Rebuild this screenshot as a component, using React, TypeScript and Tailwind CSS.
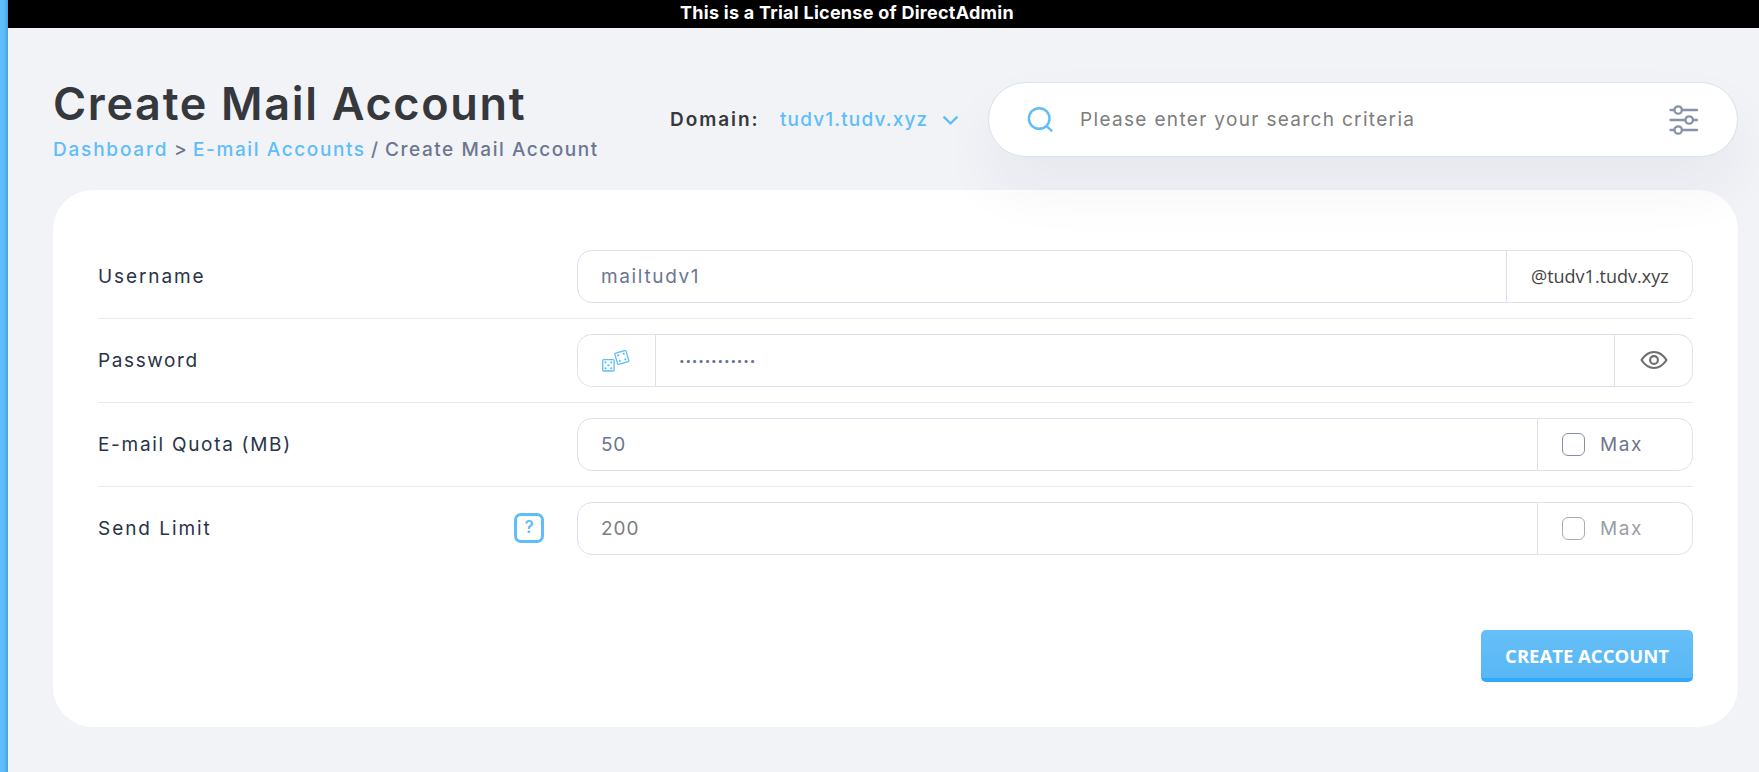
import React from "react";

const field =
  "min-w-0 flex-1 border border-[#d9e2ec] bg-transparent px-[23px] font-['Inter',sans-serif] outline-none";
const addon = "flex items-center border border-l-0 border-[#e1e3e6]";

function Row({ label, help, last, children }: { label: React.ReactNode; help?: boolean; last?: boolean; children: React.ReactNode }) {
  return (
    <div className={last ? "flex h-[84px] items-center border-b border-transparent" : "flex h-[84px] items-center border-b border-[#eaebed]"}>
      <div className="flex w-[479px] items-center justify-between pr-[33px] text-[#293347]">
        {label}
        {help && (
          <span className="mb-[2px] flex h-[30px] w-[30px] items-center justify-center rounded-[7px] border-[3px] border-[#5fbdfa] text-[17px] font-semibold text-[#5fbdfa]">
            ?
          </span>
        )}
      </div>
      <div className="flex h-[53px] w-[1116px]">{children}</div>
    </div>
  );
}

function Dice() {
  return (
    <svg width="28" height="22" viewBox="0 0 28 22" fill="none" stroke="#5fbdfa" strokeWidth="1.3">
      <rect x="0.7" y="9.6" width="11.4" height="11.4" rx="1" />
      <rect x="14" y="1.6" width="11.6" height="11.6" rx="1" transform="rotate(-16 19.8 7.4)" />
      <g fill="#5fbdfa" stroke="none">
        <circle cx="3.5" cy="12.3" r="1.1" />
        <circle cx="9.3" cy="12.3" r="1.1" />
        <circle cx="6.4" cy="15.3" r="1.1" />
        <circle cx="3.5" cy="18.3" r="1.1" />
        <circle cx="9.3" cy="18.3" r="1.1" />
        <g transform="rotate(-16 19.8 7.4)">
          <circle cx="16.9" cy="4.5" r="1.1" />
          <circle cx="22.7" cy="4.5" r="1.1" />
          <circle cx="16.9" cy="10.3" r="1.1" />
          <circle cx="22.7" cy="10.3" r="1.1" />
        </g>
      </g>
    </svg>
  );
}

export default function App() {
  return (
    <div className="flex h-[772px] w-[1759px] overflow-hidden bg-[#f1f3f7] font-['Inter',sans-serif] text-[19px]">
      <aside className="w-2 shrink-0 bg-linear-to-r from-[#5fbdfa] from-50% to-[#4b9fd6]" />
      <div className="flex flex-1 flex-col">
        <div className="flex h-7 items-center bg-black pb-[3px] pl-[672px] text-[18px] font-bold tracking-[0.26px] text-white">
          This is a Trial License of DirectAdmin
        </div>
        <header className="z-10 flex h-[162px] pl-[45px]">
          <div className="w-[617px] pt-[49px]">
            <h1 className="w-fit text-[45px] leading-[54px] font-semibold tracking-[1.68px] whitespace-nowrap text-[#35383c]">Create Mail Account</h1>
            <p className="flex text-[19px] leading-[37px] font-medium tracking-[1.6px] whitespace-nowrap text-[#6c7690]">
              <a className="w-[121px] tracking-[1.8px] text-[#5fbdfa]">Dashboard</a>
              <span className="w-[19px]">&gt;</span>
              <a className="w-[178px] text-[#5fbdfa]">E-mail Accounts</a>
              <span className="w-[14px]">/</span>
              <span className="tracking-[1.55px]">Create Mail Account</span>
            </p>
          </div>
          <div className="mt-[54px] flex h-[75px] w-[318px] items-center pt-[1px]">
            <span className="w-[110px] font-semibold tracking-[1.95px] text-[#35383c]">Domain:</span>
            <span className="w-[163px] font-medium tracking-[1.15px] text-[#5fbdfa]">tudv1.tudv.xyz</span>
            <svg width="15" height="9" viewBox="0 0 15 9" fill="none" stroke="#5fbdfa" strokeWidth="2.4" strokeLinecap="round" strokeLinejoin="round">
              <path d="M1.3 1.3 7.5 7.5 13.7 1.3" />
            </svg>
          </div>
          <div className="mt-[54px] flex h-[75px] w-[750px] items-center rounded-full border border-[#d9e2ec] bg-white pr-[38px] pl-[38px] shadow-[0_30px_60px_rgba(50,40,80,0.055)]">
            <svg width="26" height="26" viewBox="0 0 26 26" fill="none" stroke="#5fbdfa" strokeWidth="2.4" strokeLinecap="round">
              <circle cx="12.200" cy="11.500" r="10.3" />
              <path d="m19.8 19.300 4.600 4.400" />
            </svg>
            <span className="ml-[27px] pt-[2px] tracking-[1.33px] text-[#7d7d7d]">Please enter your search criteria</span>
            <svg className="ml-auto" width="30" height="30" viewBox="0 0 30 30" fill="none" stroke="#8791a8" strokeWidth="2.3" strokeLinecap="round">
              <path d="M1.500 5h3.500M13.500 5H28M1.500 15h14.500M24.500 15h3.500M1.500 25h3.500M13.500 25H28" />
              <circle cx="9.200" cy="5" r="3.700" />
              <circle cx="20.200" cy="15" r="3.700" />
              <circle cx="9.200" cy="25" r="3.700" />
            </svg>
          </div>
        </header>
        <main className="ml-[45px] flex h-[537px] w-[1685px] flex-col rounded-[40px] bg-white px-[45px] pt-[45px]">
          <Row label={<span className="pt-[2px] tracking-[1.9px]">Username</span>}>
            <input className={field + " rounded-l-[15px] pt-[2px] tracking-[1.65px] text-[#6c7690]"} defaultValue="mailtudv1" />
            <div className={addon + " w-[186px] rounded-r-[15px] pl-[24px] font-['Open_Sans',sans-serif] text-[18px] text-[#444]"}>@tudv1.tudv.xyz</div>
          </Row>
          <Row label={<span className="pt-[2px] tracking-[1.6px]">Password</span>}>
            <div className="flex w-[78px] items-center rounded-l-[15px] border border-r-0 border-[#e1e3e6] pl-[24px]"><Dice /></div>
            <input type="password" className={field + " text-[10px] tracking-[0.8px] text-[#6c7690]"} defaultValue="abcdefghijkl" />
            <div className={addon + " w-[78px] justify-center rounded-r-[15px] pb-[1px] pl-[1px]"}>
              <svg width="28" height="20" viewBox="0 0 28 20" fill="none" stroke="#6e6e6e" strokeWidth="2.1" strokeLinejoin="round">
                <path d="M1.500 10C4.800 5 9 2 14 2s9.200 3 12.500 8C23.200 15 19 18 14 18S4.800 15 1.500 10Z" />
                <circle cx="14" cy="10" r="3.900" />
              </svg>
            </div>
          </Row>
          <Row label={<span className="pt-[2px] tracking-[1.7px]">E-mail Quota (MB)</span>}>
            <input className={field + " rounded-l-[15px] pt-[2px] tracking-[0.8px] text-[#6c7690]"} defaultValue="50" />
            <div className={addon + " w-[155px] rounded-r-[15px] pl-6 text-[#6c7690]"}>
              <span className="mr-[15px] h-[23px] w-[23px] rounded-[6px] border border-[#8690a6]" />
              <span className="pt-[2px] tracking-[1.6px]">Max</span>
            </div>
          </Row>
          <Row last help label={<span className="pt-[2px] tracking-[1.95px]">Send Limit</span>}>
            <input className={field + " rounded-l-[15px] pt-[2px] tracking-[1px] text-[#7d7d7d]"} defaultValue="200" />
            <div className={addon + " w-[155px] rounded-r-[15px] pl-6 text-[#999ea8]"}>
              <span className="mr-[15px] h-[23px] w-[23px] rounded-[6px] border border-[#a6abb5]" />
              <span className="pt-[2px] tracking-[1.6px]">Max</span>
            </div>
          </Row>
          <button className="mt-[59px] h-[52px] w-[212px] self-end rounded-[5px] border-b-4 border-[#30a8f8] bg-linear-to-b from-[#66bff8] to-[#58b7f5] pt-[4px] font-['Open_Sans',sans-serif] text-[18.500px] font-bold text-white">CREATE ACCOUNT</button>
        </main>
      </div>
    </div>
  );
}
